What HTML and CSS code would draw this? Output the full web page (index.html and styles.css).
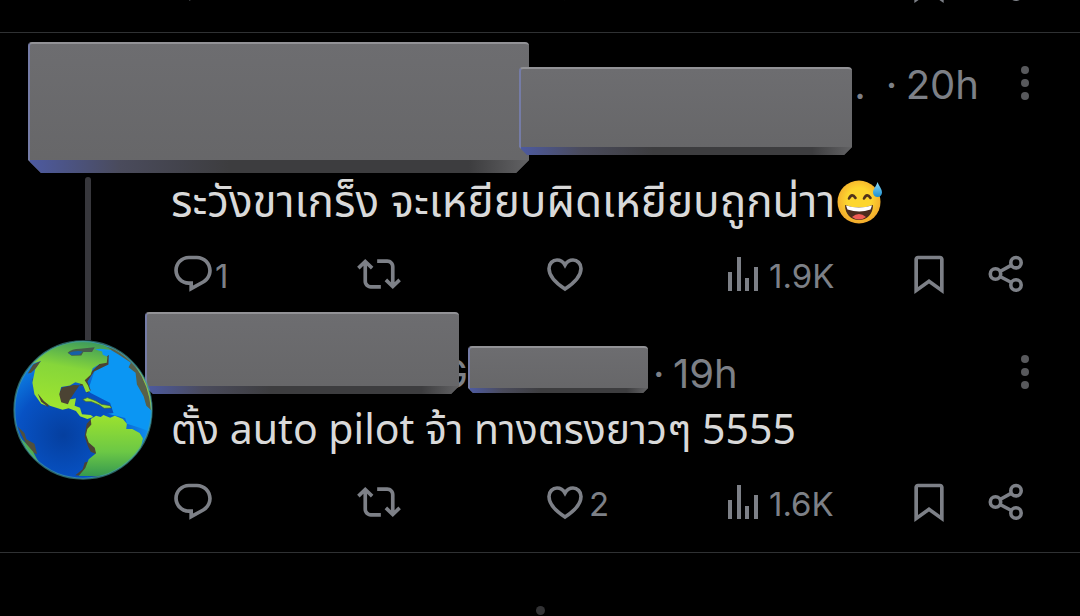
FILE: index.html
```html
<!DOCTYPE html>
<html lang="th">
<head>
    <meta charset="UTF-8">
    <meta name="viewport" content="width=device-width, initial-scale=1.0">
    <link rel="stylesheet" href="styles.css">
    <title>Thread</title>
</head>
<body>

    <svg class="sprite" aria-hidden="true">
        <symbol id="reply" viewBox="0 0 24 24">
            <path d="M1.751 10c0-4.42 3.584-8 8.005-8h4.366c4.49 0 8.129 3.64 8.129 8.13 0 2.96-1.607 5.68-4.196 7.11l-8.054 4.46v-3.69h-.067c-4.49.1-8.183-3.51-8.183-8.01zm8.005-6c-3.317 0-6.005 2.69-6.005 6 0 3.37 2.77 6.08 6.138 6.01l.351-.01h1.761v2.3l5.087-2.81c1.951-1.08 3.163-3.13 3.163-5.36 0-3.39-2.744-6.13-6.129-6.13H9.756z"/>
        </symbol>
        <symbol id="repost" viewBox="0 0 24 24">
            <path d="M4.5 3.88l4.432 4.14-1.364 1.46L5.5 7.55V16c0 1.1.896 2 2 2H13v2H7.5c-2.209 0-4-1.79-4-4V7.55L1.432 9.48.068 8.02 4.5 3.88zM16.5 6H11V4h5.5c2.209 0 4 1.79 4 4v8.45l2.068-1.93 1.364 1.46-4.432 4.14-4.432-4.14 1.364-1.46 2.068 1.93V8c0-1.1-.896-2-2-2z"/>
        </symbol>
        <symbol id="like" viewBox="0 0 44 44">
            <path d="M20 37C10 30.500 4 24 4 16.500C4 11.500 7.800 8 12 8C15.500 8 18.300 10 20 13C21.700 10 24.500 8 28 8C32.200 8 36 11.500 36 16.500C36 24 30 30.500 20 37Z" fill="none" stroke="currentColor" stroke-width="3.600"/>
        </symbol>
        <symbol id="views" viewBox="0 0 44 44">
            <path d="M3 20h4v19H3zM12 5h4v34h-4zM20 26h4v13h-4zM29 15h4v24h-4z"/>
        </symbol>
        <symbol id="bookmark" viewBox="0 0 24 24">
            <path d="M4 4c0-1.100.900-2 2-2h12c1.100 0 2 .900 2 2v18.940l-8-5.710-8 5.710V4zM6 4v15.060l6-4.290 6 4.290V4z"/>
        </symbol>
        <symbol id="share" viewBox="0 0 44 44">
            <g fill="none" stroke="currentColor" stroke-width="3.600">
                <circle cx="10.500" cy="22" r="5.200"/>
                <circle cx="31" cy="10.700" r="5.200"/>
                <circle cx="31" cy="33" r="5.200"/>
                <path d="M15 19.500L26.500 13.200M15 24.500L26.500 30.500"/>
            </g>
        </symbol>
        <symbol id="dots" viewBox="0 0 8 36">
            <circle cx="4" cy="5" r="4"/>
            <circle cx="4" cy="18" r="4"/>
            <circle cx="4" cy="31" r="4"/>
        </symbol>
    </svg>

    <main class="thread">

        <article class="tweet previous">
            <div class="rail"></div>
            <div class="content">
                <div class="actions">
                    <button aria-label="Reply"><svg class="icon"><use href="#reply"/></svg></button>
                    <button aria-label="Repost"><svg class="icon"><use href="#repost"/></svg></button>
                    <button aria-label="Like"><svg class="icon"><use href="#like"/></svg></button>
                    <button aria-label="Views"><svg class="icon"><use href="#views"/></svg></button>
                    <button aria-label="Bookmark"><svg class="icon"><use href="#bookmark"/></svg></button>
                    <button aria-label="Share"><svg class="icon"><use href="#share"/></svg></button>
                </div>
            </div>
        </article>

        <article class="tweet first">
            <div class="rail">
                <div class="line"></div>
            </div>
            <div class="content">
                <header class="head">
                    <span class="handle">...</span>
                    <span class="time"><span class="sep">·</span>20h</span>
                    <button class="menu" aria-label="More"><svg><use href="#dots"/></svg></button>
                </header>
                <p class="text">ระวังขาเกร็ง จะเหยียบผิดเหยียบถูกน่าา<svg class="emoji" viewBox="0 0 46 46" role="img" aria-label="grinning face with sweat">
                    <defs>
                        <radialGradient id="face" cx=".5" cy=".45" r=".55">
                            <stop offset=".5" stop-color="#fdd62f"/>
                            <stop offset="1" stop-color="#f3a92c"/>
                        </radialGradient>
                        <linearGradient id="drop" x2="0" y2="1">
                            <stop offset="0" stop-color="#8fdcf8"/>
                            <stop offset="1" stop-color="#1a8fd0"/>
                        </linearGradient>
                    </defs>
                    <circle cx="22" cy="23" r="21.500" fill="url(#face)"/>
                    <path d="M12 19.500q3-6 6.500-.500M27 19.500q3-6 6.500-.500" fill="none" stroke="#50331b" stroke-width="2.600" stroke-linecap="round"/>
                    <path d="M8 26q14 5 28 0c0 9-6 15-14 15S8 35 8 26z" fill="#4a2b1d"/>
                    <path d="M9 26.500q13 4 26 0l-1.500 4q-11 4-23 0z" fill="#fff"/>
                    <path d="M15 38q7-6 14 0-7 5-14 0z" fill="#ee5b55"/>
                    <path d="M40.500 3c2 5 4.500 7 4.500 10.500a4.500 4.500 0 0 1-9 0C36 10 39 8 40.500 3z" fill="url(#drop)"/>
                </svg></p>
                <div class="actions">
                    <button aria-label="Reply"><svg class="icon"><use href="#reply"/></svg><span>1</span></button>
                    <button aria-label="Repost"><svg class="icon"><use href="#repost"/></svg></button>
                    <button aria-label="Like"><svg class="icon"><use href="#like"/></svg></button>
                    <button aria-label="Views"><svg class="icon"><use href="#views"/></svg><span>1.9K</span></button>
                    <button aria-label="Bookmark"><svg class="icon"><use href="#bookmark"/></svg></button>
                    <button aria-label="Share"><svg class="icon"><use href="#share"/></svg></button>
                </div>
            </div>
            <div class="block block-author"></div>
            <div class="block block-handle"></div>
        </article>

        <article class="tweet second">
            <div class="rail">
                <div class="line"></div>
                <svg class="avatar" viewBox="40 122 418 418" role="img" aria-label="Globe">
                    <defs>
                        <radialGradient id="sea" cx=".36" cy=".68" r=".66">
                            <stop offset="0" stop-color="#053f9f"/>
                            <stop offset=".5" stop-color="#0752c4"/>
                            <stop offset="1" stop-color="#1097f4"/>
                        </radialGradient>
                        <linearGradient id="north" x1=".6" y1="0" x2=".4" y2="1">
                            <stop offset="0" stop-color="#3f9c5a"/>
                            <stop offset=".35" stop-color="#86d63a"/>
                            <stop offset="1" stop-color="#a5e82c"/>
                        </linearGradient>
                        <linearGradient id="south" x2="0" y2="1">
                            <stop offset="0" stop-color="#9ce22e"/>
                            <stop offset=".6" stop-color="#6cc845"/>
                            <stop offset="1" stop-color="#379a50"/>
                        </linearGradient>
                        <clipPath id="disc"><circle cx="249" cy="331" r="205"/></clipPath>
                    </defs>
                    <g clip-path="url(#disc)">
                        <rect x="40" y="122" width="418" height="418" fill="url(#sea)"/>
                        <path d="M310 155L460 155V400L420 385L380 372L375 355L335 345L300 335L255 320L262 278L280 225Z" fill="#0b96f3"/>
                        <path d="M176 285L200 262L244 258L272 280L330 310L340 340L280 348L240 330L180 318Z" fill="#0750bf"/>
                        <path d="M84 222L100 195L124 184L116 200L94 220ZM54 380L74 400L80 418L104 432L112 462L90 456Z" fill="#51503c"/>
                        <path d="M48 400L78 430L100 456L116 486L70 470Z" fill="#4fae55"/>
                        <path d="M290 134L350 150L400 190L456 270V335L438 318L430 290L410 255L406 220L385 203L392 190L355 165L330 150Z" fill="#58604a"/>
                        <path d="M408 200Q448 256 454 330" fill="none" stroke="#a8cf35" stroke-width="4"/>
                        <!-- coast shadow -->
                        <g fill="#4b4333">
                            <path d="M276 355L260 372L254 410L264 440L272 456L288 462L268 484L254 488L248 508L226 526L300 530L320 400Z"/>
                            <path d="M326 166L325 195L282 216L262 246L272 272L262 280L248 258L222 256L186 264L176 285L182 320L205 328L210 300L250 240Z"/>
                            <path d="M98 236L104 280L126 312L146 322L140 290Z"/>
                        </g>
                        <path d="M70 210Q120 118 249 122L310 136L335 152L300 148L285 150L306 156L308 166L322 172L320 190L298 194L278 206L272 226L254 242L264 258L270 274L258 278L248 254L226 248L210 258L184 262L178 284L184 308L204 314L210 300L228 296L224 318L240 324L246 344L272 346L280 352L262 358L240 350L228 334L206 326L188 330L150 318L132 304L114 282L124 306L140 318L124 312L104 284L98 250L106 210L124 184L100 192Z" fill="url(#north)"/>
                        <path d="M203 160Q215 148 240 148L284 144L276 158L250 158L244 168L215 169Z" fill="#455b4a"/>
                        <path d="M206 161Q226 152 248 156L238 166L214 167Z" fill="#1560a8"/>
                        <path d="M248 300L262 294L288 304L304 314L330 318L334 325L312 326L298 316L274 306L258 306Z" fill="#9ade36" stroke="#3a5a46" stroke-width="2"/>
                        <path d="M258 405L262 388L274 374L272 358L288 348L302 352L310 346L330 354L344 348L368 358L380 372L378 388L396 388L418 400L428 416L420 452L398 478L372 502L340 514L318 526L290 528L236 528L256 504L266 478L288 460L284 444L266 428Z" fill="url(#south)"/>
                    </g>
                    <circle cx="249" cy="331" r="205" fill="none" stroke="#49a3a0" stroke-opacity=".6" stroke-width="6"/>
                </svg>
            </div>
            <div class="content">
                <header class="head">
                    <span class="name">G</span>
                    <span class="handle"></span>
                    <span class="time"><span class="sep">·</span>19h</span>
                    <button class="menu" aria-label="More"><svg><use href="#dots"/></svg></button>
                </header>
                <p class="text">ตั้ง auto pilot จ้า ทางตรงยาวๆ 5555</p>
                <div class="actions">
                    <button aria-label="Reply"><svg class="icon"><use href="#reply"/></svg></button>
                    <button aria-label="Repost"><svg class="icon"><use href="#repost"/></svg></button>
                    <button aria-label="Like"><svg class="icon"><use href="#like"/></svg><span>2</span></button>
                    <button aria-label="Views"><svg class="icon"><use href="#views"/></svg><span>1.6K</span></button>
                    <button aria-label="Bookmark"><svg class="icon"><use href="#bookmark"/></svg></button>
                    <button aria-label="Share"><svg class="icon"><use href="#share"/></svg></button>
                </div>
            </div>
            <div class="block block-name"></div>
            <div class="block block-tag"></div>
        </article>

    </main>

    <footer class="end">
        <span class="end-dot"></span>
    </footer>

</body>
</html>
```

FILE: styles.css
```css
*{
    margin: 0;
    padding: 0;
    box-sizing: border-box;
}

body{
    background: #000;
    color: #d9d9d9;
    font-family: "Noto Sans", "Noto Sans Thai", sans-serif;
    overflow: hidden;
}

button{
    background: none;
    border: none;
    color: inherit;
    font: inherit;
    cursor: pointer;
}

svg{
    fill: currentColor;
}

.sprite{
    display: none;
}

.tweet{
    position: relative;
    display: flex;
}

.previous{
    height: 33px;
    overflow: hidden;
    align-items: flex-end;
    padding-bottom: 21px;
    border-bottom: 1px solid #2f3133;
}

.second{
    border-bottom: 1px solid #2f3133;
}

/* left column with the thread line */
.rail{
    flex: none;
    width: 171px;
    display: flex;
    flex-direction: column;
    padding-left: 13px;
}

.line{
    width: 6px;
    margin-left: 72px;
    background: #37373c;
}

.first .line{
    flex: 1;
    margin-top: 144px;
    border-radius: 3px 3px 0 0;
}

.second .line{
    height: 18px;
}

.avatar{
    position: relative;
    z-index: 2;
    width: 140px;
    height: 140px;
}

.content{
    flex: 1;
    min-width: 0;
    padding-right: 51px;
}

.first .content{
    padding-top: 24px;
    padding-bottom: 20px;
}

.second .content{
    padding-top: 24px;
    padding-bottom: 22px;
}

.head{
    display: flex;
    align-items: flex-start;
    color: #7d8087;
    font-family: Inter, sans-serif;
    font-size: 40px;
    line-height: 56px;
}

.first .head{
    min-height: 117px;
}

.first .handle{
    flex: 1;
    text-align: right;
    margin-right: 20px;
}

.second .name{
    width: 297px;
    text-align: right;
}

.second .handle{
    width: 185px;
}

.time{
    display: flex;
}

.sep{
    width: 20px;
}

.menu{
    display: flex;
    align-items: center;
    height: 52px;
    margin-left: auto;
    color: #58595c;
}

.first .menu{
    margin-left: 42px;
}

.menu svg{
    width: 8px;
    height: 36px;
}

.text{
    font-size: 41px;
    line-height: 52px;
    white-space: nowrap;
}

.first .text{
    height: 52px;
    font-size: 44px;
}

.emoji{
    width: 46px;
    height: 46px;
    margin-left: 2px;
    vertical-align: -8px;
}

.actions{
    display: grid;
    grid-template-columns: 186fr 188fr 180fr 182fr 78fr 44fr;
    margin-top: 20px;
    color: #7d8087;
    font-family: Inter, sans-serif;
    font-size: 33px;
    line-height: 56px;
}

.actions button{
    display: flex;
    align-items: center;
    height: 56px;
}

.actions span{
    padding-top: 4px;
}

.icon{
    flex: none;
    width: 44px;
    height: 44px;
}

/* grey slabs lying over the names */
.block{
    --bevel: 8px;
    position: absolute;
    z-index: 1;
    border-radius: 4px;
    border-top: 2px solid #929296;
    border-left: 2px solid #757ca6;
    background:
        linear-gradient(to right, #4d5aa0, #4a4b5c 18%, #3d3d3f 40%, #3d3d3f 88%, #626264) bottom / 100% var(--bevel) no-repeat,
        linear-gradient(#6d6d70, #666668);
    clip-path: polygon(0 0, 100% 0, 100% calc(100% - var(--bevel)), calc(100% - var(--bevel)) 100%, var(--bevel) 100%, 0 calc(100% - var(--bevel)));
}

.block-author{
    --bevel: 13px;
    left: 28px;
    top: 9px;
    width: 501px;
    height: 131px;
}

.block-handle{
    left: 519px;
    top: 34px;
    width: 333px;
    height: 88px;
}

.block-name{
    left: 145px;
    top: -10px;
    width: 314px;
    height: 82px;
}

.block-tag{
    --bevel: 5px;
    left: 468px;
    top: 24px;
    width: 180px;
    height: 47px;
}

.end{
    display: flex;
    justify-content: center;
    padding-top: 53px;
}

.end-dot{
    width: 9px;
    height: 9px;
    border-radius: 50%;
    background: #333335;
}
```
